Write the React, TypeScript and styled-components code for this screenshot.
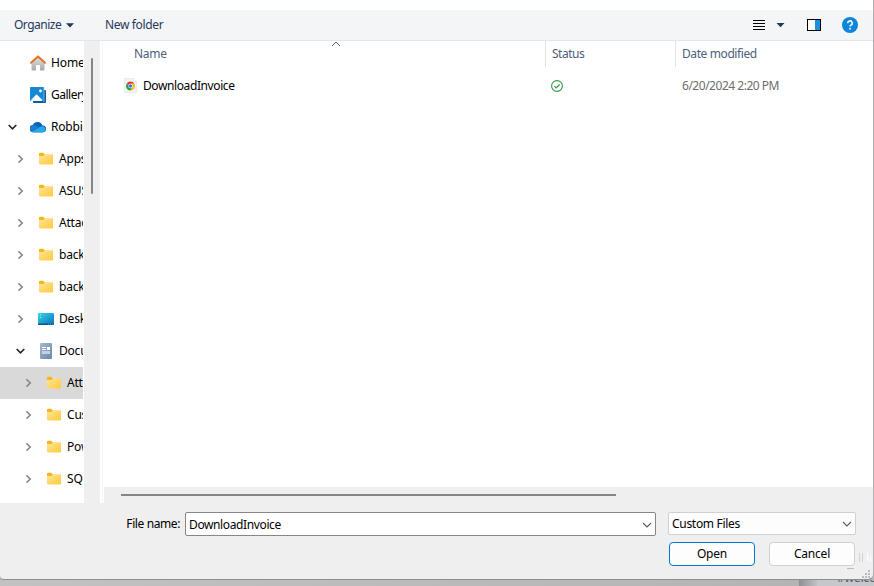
import React from "react";
import styled, { createGlobalStyle } from "styled-components";

const GlobalStyle = createGlobalStyle`
  * { box-sizing: border-box; }
  html, body { margin: 0; padding: 0; overflow: hidden; background: #b7b7b7; }
  body { font-family: "Noto Sans", "Open Sans", sans-serif; font-size: 12px; color: #000; }
  button, input { font: inherit; color: inherit; }
`;

const Screen = styled.div`
  width: 874px;
  height: 586px;
  overflow: hidden;
  display: flex;
  flex-direction: column;
  background: #b7b7b7;
`;

const Dialog = styled.div`
  height: 580px;
  flex: none;
  display: flex;
  flex-direction: column;
  background: #efefef;
  border-right: 1px solid #b0b0b2;
  border-bottom: 1px solid #8e8e8e;
  border-radius: 0 0 6px 4px;
`;

const TitleStrip = styled.div`
  height: 10px;
  flex: none;
  background: #fff;
`;

const Toolbar = styled.div`
  height: 31px;
  flex: none;
  display: flex;
  align-items: center;
  padding: 0 15px 0 14px;
  background: #f4f5f7;
  border-bottom: 1px solid #e3e5e8;
  color: #1e395b;
`;

const Label = styled.span<{ $spacing?: number }>`
  white-space: nowrap;
  line-height: 16px;
  letter-spacing: ${(p) => p.$spacing ?? -0.2}px;
`;

const Organize = styled.div`
  display: flex;
  align-items: center;
  gap: 5px;
  width: 91px;
`;

const ToolIcons = styled.div`
  display: flex;
  align-items: center;
  margin-left: auto;
`;

const Body = styled.div`
  height: 462px;
  flex: none;
  display: flex;
`;

const Tree = styled.div`
  width: 84px;
  flex: none;
  padding: 6px 1px 0 0;
  background: #fff;
`;

const TreeRow = styled.div<{ $indent: number; $selected?: boolean }>`
  height: 32px;
  display: flex;
  align-items: center;
  overflow: hidden;
  padding-left: ${(p) => p.$indent}px;
  background: ${(p) => (p.$selected ? "#d9d9d9" : "transparent")};
`;

const ChevronSlot = styled.span`
  width: 9px;
  flex: none;
  display: flex;
  justify-content: center;
  margin-right: 13px;
`;

const IconSlot = styled.span`
  width: 16px;
  height: 16px;
  flex: none;
  margin-right: 5px;
  display: flex;
`;

const FileIconSlot = styled(IconSlot)`
  margin-right: 3px;
`;

const TreeScroll = styled.div`
  width: 16px;
  flex: none;
  padding: 17px 0 0 7px;
  background: #efefef;
`;

const VThumb = styled.div`
  width: 2px;
  height: 136px;
  background: #858585;
  border-radius: 1px;
`;

const Splitter = styled.div`
  width: 4px;
  flex: none;
  background: linear-gradient(to right, #fff 2px, #f5f5f5 2px, #f5f5f5 3px, #fff 3px);
`;

const Files = styled.div`
  flex: 1;
  display: flex;
  flex-direction: column;
  background: #fff;
`;

const Header = styled.div`
  height: 26px;
  flex: none;
  display: grid;
  grid-template-columns: 441px 130px 1fr;
  color: #4c607a;
`;

const HeaderCell = styled.div<{ $left: number; $divided?: boolean }>`
  display: flex;
  align-items: center;
  padding-left: ${(p) => p.$left}px;
  border-left: ${(p) => (p.$divided ? "1px solid #e2e2e2" : "0")};
`;

const SortMark = styled.span`
  display: flex;
  align-self: flex-start;
  margin-left: 164.5px;
`;

const FileRow = styled.div`
  height: 32px;
  margin-top: 3px;
  display: grid;
  grid-template-columns: 441px 130px 1fr;
  align-items: center;
`;

const FileCell = styled.div<{ $left: number; $muted?: boolean }>`
  display: flex;
  align-items: center;
  padding-left: ${(p) => p.$left}px;
  color: ${(p) => (p.$muted ? "#6d6d6d" : "#000")};
`;

const HScroll = styled.div`
  height: 16px;
  margin-top: auto;
  padding: 7px 0 0 17px;
  background: #efefef;
`;

const HThumb = styled.div`
  width: 495px;
  height: 2px;
  background: #858585;
`;

const Footer = styled.div`
  flex: 1;
  display: grid;
  grid-template-columns: 180px 471px 188px;
  grid-template-rows: 24px 24px;
  column-gap: 5px;
  row-gap: 6px;
  padding-top: 9px;
  position: relative;
`;

const FieldLabel = styled.label`
  display: flex;
  align-items: center;
  justify-content: flex-end;
`;

const Combo = styled.div`
  height: 24px;
  display: flex;
  align-items: center;
  justify-content: space-between;
  padding: 1px 3px 0 3px;
  background: #fff;
  border: 1px solid #868686;
  border-radius: 2px;
`;

const FilterCombo = styled(Combo)`
  width: 188px;
  height: 23px;
  margin-left: 7px;
  padding: 0 3px;
  background: #fdfdfd;
  border-color: #d0d0d0;
`;

const Actions = styled.div`
  grid-column: 3;
  display: flex;
  gap: 14px;
  margin-left: 8px;
`;

const Button = styled.button<{ $primary?: boolean }>`
  width: 86px;
  height: 24px;
  flex: none;
  padding: 0;
  display: flex;
  align-items: center;
  justify-content: center;
  background: #fdfdfd;
  border: 1px solid ${(p) => (p.$primary ? "#0078d4" : "#d0d0d0")};
  border-radius: 4px;
`;

const Grip = styled.svg`
  position: absolute;
  right: 0;
  bottom: 0;
`;

const Behind = styled.div`
  flex: 1;
  display: grid;
  grid-template-columns: 799px 18px 1fr;
  overflow: hidden;
`;

const BehindPane = styled.div<{ $from: string; $to: string }>`
  overflow: hidden;
  background: linear-gradient(to right, ${(p) => p.$from}, ${(p) => p.$to});
`;

const Channel = styled.div`
  margin: -10px 0 0 20px;
  line-height: 16px;
  font-size: 12px;
  font-weight: 500;
  letter-spacing: -0.3px;
  color: #596174;
  white-space: nowrap;
`;

const TreeChevron = ({ open }: { open?: boolean }) =>
  open ? (
    <svg width="9" height="8" viewBox="0 0 9 8" fill="none">
      <path d="M.7 2 4.5 5.8 8.3 2" stroke="#222" strokeWidth="1.6" />
    </svg>
  ) : (
    <svg width="7" height="10" viewBox="0 0 7 10" fill="none">
      <path d="M1.4 1.2 5.2 5 1.4 8.8" stroke="#858585" strokeWidth="1.6" />
    </svg>
  );

const ComboChevron = () => (
  <svg width="10" height="6" viewBox="0 0 10 6" fill="none">
    <path d="M1 1 5 5 9 1" stroke="#5c5c5c" strokeWidth="1.1" />
  </svg>
);

const Triangle = () => (
  <svg width="8" height="5" viewBox="0 0 8 5">
    <path d="M0 .3H8L4 4.5Z" fill="#1e395b" />
  </svg>
);

const FolderIcon = () => (
  <svg width="16" height="16" viewBox="0 0 16 16">
    <defs>
      <linearGradient id="folder" x1="0" y1="0" x2="1" y2="1">
        <stop offset="0" stopColor="#ffe59b" />
        <stop offset="1" stopColor="#ffc93a" />
      </linearGradient>
    </defs>
    <path d="M1 2.6Q1 1.7 2 1.7H5.2L6.8 3.2V7H1Z" fill="#f5b51e" />
    <path d="M1 5H5.6L7.2 3.2H14Q15 3.2 15 4.2V12.4Q15 13.4 14 13.4H2Q1 13.4 1 12.4Z" fill="url(#folder)" />
  </svg>
);

const HomeIcon = () => (
  <svg width="16" height="16" viewBox="0 0 16 16">
    <defs>
      <linearGradient id="wall" x1="0" y1="0" x2="0" y2="1">
        <stop offset="0" stopColor="#e2e2e2" />
        <stop offset="1" stopColor="#aaa" />
      </linearGradient>
    </defs>
    <path d="M1.5 7 8 1.5 14.5 7V14.5Q14.5 15.5 13.5 15.5H10V10H6V15.5H2.5Q1.5 15.5 1.5 14.5Z" fill="url(#wall)" />
    <path d="M1 7.8 8 1.4 15 7.8" fill="none" stroke="#e37427" strokeWidth="2" strokeLinecap="round" strokeLinejoin="round" />
  </svg>
);

const GalleryIcon = () => (
  <svg width="16" height="16" viewBox="0 0 16 16">
    <path d="M3 3H15Q16 3 16 4V15Q16 16 15 16H4Q3 16 3 15Z" fill="#0d5ca8" />
    <rect width="14" height="14" rx="1" fill="#1686d5" />
    <path d="M14 1V15" stroke="#b7ddf8" strokeWidth=".6" />
    <path d="M1 13 6.5 7.2 12.5 13Q12 14 11 14H2Q1 14 1 13Z" fill="#f2faff" />
    <circle cx="10.5" cy="4" r="1.4" fill="#fff" />
  </svg>
);

const CloudIcon = () => (
  <svg width="16" height="16" viewBox="0 0 16 16">
    <path d="M3.5 13.2A3.5 3.5 0 0 1 2.7 6 5.4 5.4 0 0 1 12.5 6.4 3.3 3.3 0 0 1 13 13.2Z" fill="#0864b9" />
    <path d="M3.5 13.2A3.4 3.4 0 0 1 .5 8Q2 5.5 4.8 6.3L15 11.5Q14.3 13.2 12.7 13.2Z" fill="#1280d5" />
    <path d="M2.2 12.7 8.7 9.1Q10.8 6.8 13.3 7.5A3.2 3.2 0 0 1 15.3 11.7Q14.5 13.2 12.7 13.2H3.8Z" fill="#28a8ea" />
  </svg>
);

const DesktopIcon = () => (
  <svg width="16" height="16" viewBox="0 0 16 16">
    <defs>
      <linearGradient id="desk" x1="0" y1="0" x2="1" y2="1">
        <stop offset="0" stopColor="#35d5e5" />
        <stop offset="1" stopColor="#0872bf" />
      </linearGradient>
    </defs>
    <rect y="2" width="16" height="12" rx="1" fill="url(#desk)" />
    <path d="M0 12.5H16V13Q16 14 15 14H1Q0 14 0 13Z" fill="#085887" />
    <path d="M2 4H3M2 6.5H3" stroke="#a7eff8" />
    <path d="M10 13.2H11M12 13.2H13M14 13.2H15" stroke="#6fb4d8" strokeWidth=".8" />
  </svg>
);

const DocumentsIcon = () => (
  <svg width="16" height="16" viewBox="0 0 16 16">
    <defs>
      <linearGradient id="doc" x1="0" y1="0" x2="1" y2="1">
        <stop offset="0" stopColor="#a5bacf" />
        <stop offset="1" stopColor="#6786aa" />
      </linearGradient>
    </defs>
    <rect x="2" width="12" height="16" rx="1.2" fill="url(#doc)" />
    <path d="M4 4.5H8M4 6.5H8" stroke="#fff" />
    <rect x="9" y="4" width="3" height="3" fill="#fff" />
    <rect x="4" y="8" width="8" height="3" fill="#c3d0dd" />
  </svg>
);

const ChromeFileIcon = () => (
  <svg width="14" height="16" viewBox="0 0 14 16">
    <path d="M.5 .5H9.5L12.5 3.5V14.5H.5Z" fill="#f3f3f3" stroke="#e4e4e4" strokeWidth=".7" />
    <path d="M9.5 .5V3.5H12.5" fill="#fff" stroke="#ddd" strokeWidth=".6" />
    <path d="M6.5 8 2.6 5.7A4.5 4.5 0 0 1 10.4 5.7H6.5Z" fill="#e33b2e" />
    <path d="M6.5 8 2.6 5.7A4.5 4.5 0 0 0 6.5 12.5L8.5 9.1Z" fill="#27a04b" />
    <path d="M6.5 5.7H10.4A4.5 4.5 0 0 1 6.5 12.5L8.5 9.1Z" fill="#fbc116" />
    <circle cx="6.5" cy="8" r="2.2" fill="#fff" />
    <circle cx="6.5" cy="8" r="1.7" fill="#3478de" />
  </svg>
);

const icons = {
  home: HomeIcon,
  gallery: GalleryIcon,
  cloud: CloudIcon,
  folder: FolderIcon,
  desktop: DesktopIcon,
  documents: DocumentsIcon,
};

type Item = {
  label: string;
  icon: keyof typeof icons;
  depth: number;
  state?: "open" | "closed";
  selected?: boolean;
  spacing?: number;
};

const items: Item[] = [
  { label: "Home", icon: "home", depth: 0, spacing: -0.1 },
  { label: "Gallery", icon: "gallery", depth: 0, spacing: -0.5 },
  { label: "Robbie", icon: "cloud", depth: 0, state: "open" },
  { label: "Apps", icon: "folder", depth: 1, state: "closed" },
  { label: "ASUS", icon: "folder", depth: 1, state: "closed" },
  { label: "Attach", icon: "folder", depth: 1, state: "closed" },
  { label: "backu", icon: "folder", depth: 1, state: "closed" },
  { label: "backu", icon: "folder", depth: 1, state: "closed" },
  { label: "Deskt", icon: "desktop", depth: 1, state: "closed" },
  { label: "Docum", icon: "documents", depth: 1, state: "open" },
  { label: "Atta", icon: "folder", depth: 2, state: "closed", selected: true },
  { label: "Cust", icon: "folder", depth: 2, state: "closed" },
  { label: "Pow", icon: "folder", depth: 2, state: "closed" },
  { label: "SQL", icon: "folder", depth: 2, state: "closed" },
];

export default function App() {
  return (
    <Screen>
      <GlobalStyle />
      <Dialog>
        <TitleStrip />
        <Toolbar>
          <Organize>
            <Label $spacing={-0.5}>Organize</Label>
            <Triangle />
          </Organize>
          <Label $spacing={-0.35}>New folder</Label>
          <ToolIcons>
            <svg width="106" height="16" viewBox="0 0 106 16">
              <path d="M1 3.5H13M1 6.5H13M1 9.5H13M1 12.5H13" stroke="#000" />
              <path d="M24.5 6H32.5L28.5 10.2Z" fill="#1e395b" />
              <rect x="55.5" y="2.5" width="13" height="11" fill="#fff" stroke="#000" />
              <rect x="63" y="3" width="5" height="10" fill="#1b91df" />
              <circle cx="98" cy="8" r="8" fill="#0c85da" />
              <path d="M95.8 6.2A2.2 2.2 0 1 1 98.9 8.1Q98 8.5 98 9.6" fill="none" stroke="#fff" strokeWidth="1.5" />
              <circle cx="98" cy="11.7" r=".9" fill="#fff" />
            </svg>
          </ToolIcons>
        </Toolbar>
        <Body>
          <Tree>
            {items.map((item, i) => {
              const Icon = icons[item.icon];
              return (
                <TreeRow key={i} $indent={8 + item.depth * 8} $selected={item.selected}>
                  <ChevronSlot>{item.state && <TreeChevron open={item.state === "open"} />}</ChevronSlot>
                  <IconSlot>
                    <Icon />
                  </IconSlot>
                  <Label $spacing={item.spacing}>{item.label}</Label>
                </TreeRow>
              );
            })}
          </Tree>
          <TreeScroll>
            <VThumb />
          </TreeScroll>
          <Splitter />
          <Files>
            <Header>
              <HeaderCell $left={30}>
                <Label $spacing={-0.3}>Name</Label>
                <SortMark>
                  <svg width="10" height="6" viewBox="0 0 10 6" fill="none">
                    <path d="M1 5 5 1 9 5" stroke="#5c5c5c" />
                  </svg>
                </SortMark>
              </HeaderCell>
              <HeaderCell $left={6} $divided>
                <Label $spacing={-0.5}>Status</Label>
              </HeaderCell>
              <HeaderCell $left={6} $divided>
                <Label $spacing={-0.4}>Date modified</Label>
              </HeaderCell>
            </Header>
            <FileRow>
              <FileCell $left={20}>
                <FileIconSlot>
                  <ChromeFileIcon />
                </FileIconSlot>
                <Label $spacing={-0.4}>DownloadInvoice</Label>
              </FileCell>
              <FileCell $left={6}>
                <svg width="12" height="12" viewBox="0 0 12 12" fill="none" stroke="#2d9b48">
                  <circle cx="6" cy="6" r="5.4" strokeWidth="1.1" />
                  <path d="M3.5 6.2 5.2 7.9 8.6 4.5" strokeWidth="1.2" />
                </svg>
              </FileCell>
              <FileCell $left={7} $muted>
                <Label $spacing={-0.48}>6/20/2024 2:20 PM</Label>
              </FileCell>
            </FileRow>
            <HScroll>
              <HThumb />
            </HScroll>
          </Files>
        </Body>
        <Footer>
          <FieldLabel>
            <Label $spacing={-0.4}>File name:</Label>
          </FieldLabel>
          <Combo>
            <Label $spacing={-0.38}>DownloadInvoice</Label>
            <ComboChevron />
          </Combo>
          <FilterCombo>
            <Label $spacing={-0.3}>Custom Files</Label>
            <ComboChevron />
          </FilterCombo>
          <Actions>
            <Button $primary>
              <Label>Open</Label>
            </Button>
            <Button>
              <Label>Cancel</Label>
            </Button>
          </Actions>
          <Grip width="30" height="28" viewBox="0 0 30 28">
            <path d="M16.5 2V11M19.5 2V11" stroke="#d2d2d2" />
            <path d="M24.5 2V10M27.5 5V11" stroke="#fff" />
            <path d="M4 17.5H11" stroke="#bdbdbd" />
            <path d="M25 19h2v2h-2zM22 22h2v2h-2zM25 22h2v2h-2zM19 25h2v2h-2zM22 25h2v2h-2zM25 25h2v2h-2z" fill="#bcbcbc" />
          </Grip>
        </Footer>
      </Dialog>
      <Behind>
        <BehindPane $from="#c2c2c2" $to="#b4b4b4" />
        <BehindPane $from="#8f9094" $to="#c0c1c4" />
        <BehindPane $from="#c6c7ca" $to="#c6c7ca">
          <Channel>#welcome</Channel>
        </BehindPane>
      </Behind>
    </Screen>
  );
}
